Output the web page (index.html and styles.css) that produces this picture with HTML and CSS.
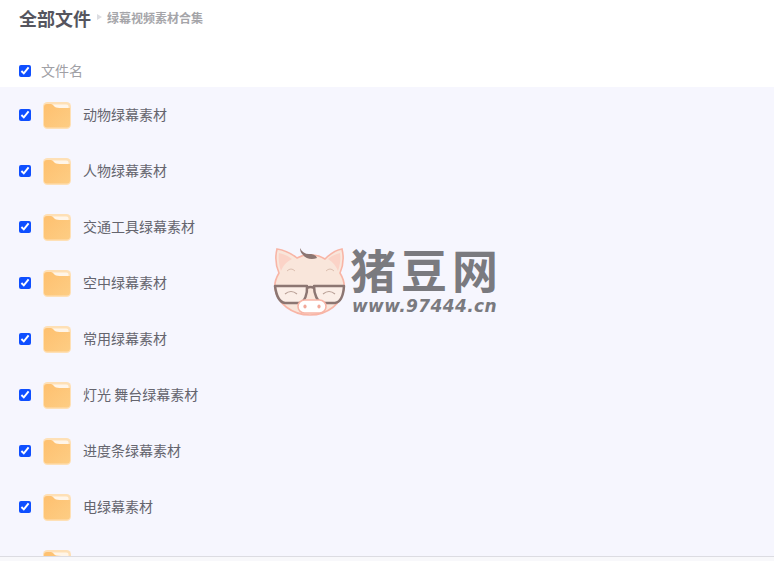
FILE: index.html
```html
<!DOCTYPE html>
<html lang="zh-CN">
<head>
<meta charset="utf-8">
<title>绿幕视频素材合集</title>
<link rel="stylesheet" href="styles.css">
</head>
<body>
<svg class="defs" width="0" height="0" aria-hidden="true">
  <defs>
    <linearGradient id="fg" x1="0" y1="0" x2="1" y2="1">
      <stop offset="0" stop-color="#fec06f"/>
      <stop offset="1" stop-color="#fdcd84"/>
    </linearGradient>
    <symbol id="folder" viewBox="0 0 28 27">
      <rect x="0" y="0" width="28" height="27" rx="4.500" fill="#fee0b6"/>
      <path d="M8 2.500h15.500a2 2 0 0 1 2 2V8H10z" fill="#fff5e8"/>
      <path d="M1 5a3 3 0 0 1 3-3h4c2 0 3 3 5 3.500 3 .7 8 .5 14 .5v16.500a3 3 0 0 1-3 3H4a3 3 0 0 1-3-3z" fill="url(#fg)"/>
    </symbol>
  </defs>
</svg>
<main class="page">
  <header class="crumbs">
    <h1 class="crumb-root">全部文件</h1>
    <span class="crumb-sep"></span>
    <span class="crumb-current">绿幕视频素材合集</span>
  </header>
  <div class="head-row">
    <input class="check" type="checkbox" checked aria-label="全选">
    <span class="head-label">文件名</span>
  </div>
  <ul class="list">
    <li class="row"><input class="check" type="checkbox" checked><svg class="folder"><use href="#folder"/></svg><span class="name">动物绿幕素材</span></li>
    <li class="row"><input class="check" type="checkbox" checked><svg class="folder"><use href="#folder"/></svg><span class="name">人物绿幕素材</span></li>
    <li class="row"><input class="check" type="checkbox" checked><svg class="folder"><use href="#folder"/></svg><span class="name">交通工具绿幕素材</span></li>
    <li class="row"><input class="check" type="checkbox" checked><svg class="folder"><use href="#folder"/></svg><span class="name">空中绿幕素材</span></li>
    <li class="row"><input class="check" type="checkbox" checked><svg class="folder"><use href="#folder"/></svg><span class="name">常用绿幕素材</span></li>
    <li class="row"><input class="check" type="checkbox" checked><svg class="folder"><use href="#folder"/></svg><span class="name">灯光 舞台绿幕素材</span></li>
    <li class="row"><input class="check" type="checkbox" checked><svg class="folder"><use href="#folder"/></svg><span class="name">进度条绿幕素材</span></li>
    <li class="row"><input class="check" type="checkbox" checked><svg class="folder"><use href="#folder"/></svg><span class="name">电绿幕素材</span></li>
    <li class="row"><input class="check" type="checkbox" checked><svg class="folder"><use href="#folder"/></svg><span class="name"></span></li>
  </ul>
  <div class="footer-bar"></div>
</main>
<div class="watermark">
  <svg class="pig" viewBox="0 0 80 75" aria-hidden="true">
    <path d="M7 4 C14 5 22 9 27 13 C36 8 47 9 55 14 C60 9 66 5 72 4 C74 12 73 21 70 28 C73 33 75 38 74 44 C72 58 58 70 40 70 C22 70 7 58 5 44 C4 38 6 33 9 28 C6 21 5 12 7 4Z" fill="#f9e6db" stroke="#f8b5a6" stroke-width="1.600"/>
    <path d="M9 8 C14 9 18 11 22 14 C16 17 13 21 11 26 C9 20 8 14 9 8Z" fill="#fbd3c7"/>
    <path d="M70 8 C66 9 61 11 58 14 C63 17 66 21 68 26 C70 20 71 14 70 8Z" fill="#fbd3c7"/>
    <path d="M30 3 C32 7 35 9 39 9 C43 9 46 10 47 13 C42 15 36 14 33 10 C31 8 30 6 30 3Z" fill="#8c7672"/>
    <path d="M17 26q4-4 8 0M56 26q4-4 8 0" fill="none" stroke="#dcbfb0" stroke-width="1"/>
    <path d="M37 43q3.500-2 7 0" fill="none" stroke="#8c7672" stroke-width="2.500"/>
    <path d="M5 41h32c.5 8-2 16-8 17H15c-6-1-9-9-10-17ZM44 41h30c-.5 8-3 16-9 17H53c-6-1-9-9-9-17Z" fill="#fbeee7" stroke="#8c7672" stroke-width="2.500" stroke-linejoin="round"/>
    <path d="M15 49q6-5 12 0M53 49q6-5 12 0" fill="none" stroke="#b9a096" stroke-width="1.200"/>
    <rect x="28" y="55" width="28" height="13" rx="6.500" fill="#fff" stroke="#f8b5a6" stroke-width="1.600"/>
    <ellipse cx="35" cy="61.500" rx="1.600" ry="2" fill="#f2a99a"/>
    <ellipse cx="49" cy="61.500" rx="1.600" ry="2" fill="#f2a99a"/>
  </svg>
  <div class="wm-text">
    <div class="wm-title">猪豆网</div>
    <div class="wm-url">www.97444.cn</div>
  </div>
</div>
</body>
</html>
```
FILE: styles.css
```css
* { box-sizing: border-box; }
html, body { margin: 0; height: 100%; overflow: hidden; background: #fff; }
body { font-family: "Noto Sans CJK SC", "Noto Sans", sans-serif; }
.defs { display: block; height: 0; }
.page { display: flex; flex-direction: column; height: 561px; }
.crumbs { flex: none; height: 55px; display: flex; align-items: flex-start; padding: 5px 0 0 19px; }
.crumb-root { margin: 0; font-size: 18px; line-height: 26px; font-weight: 700; color: #55555e; }
.crumb-sep { width: 0; height: 0; margin: 9px 5px 0 6px; border-left: 5px solid #dcdde2; border-top: 3.500px solid transparent; border-bottom: 3.500px solid transparent; }
.crumb-current { font-size: 12px; line-height: 26px; font-weight: 700; color: #a5a5a9; }
.head-row { flex: none; height: 32px; display: flex; align-items: center; padding-left: 19px; }
.head-label { margin-left: 10px; padding-bottom: 2px; font-size: 14px; color: #a0a0a5; }
.check { flex: none; width: 12px; height: 12px; margin: 0; accent-color: #0f4fff; }
.list { flex: 1; min-height: 0; overflow: hidden; margin: 0; padding: 0; list-style: none; background: #f6f6fe; }
.row { height: 56px; display: flex; align-items: center; padding-left: 19px; }
.folder { flex: none; width: 28px; height: 27px; margin-left: 12px; }
.name { margin-left: 12px; padding-bottom: 2px; font-size: 14px; color: #65656e; }
.footer-bar { flex: none; height: 5px; background: #f8f8fb; border-top: 1px solid #dcdce2; }
.watermark { position: absolute; left: 270px; top: 245px; display: flex; align-items: flex-start; }
.pig { display: block; flex: none; width: 80px; height: 75px; }
.wm-text { display: flex; flex-direction: column; }
.wm-title { font-size: 46px; line-height: 46px; font-weight: 700; color: #7a7a7f; letter-spacing: 5px; white-space: nowrap; }
.wm-url { font-family: "DejaVu Sans", sans-serif; margin-top: 5px; padding-left: 2px; font-size: 17px; line-height: 20px; font-weight: 700; font-style: italic; color: #7a7a7f; letter-spacing: .4px; white-space: nowrap; }
```
